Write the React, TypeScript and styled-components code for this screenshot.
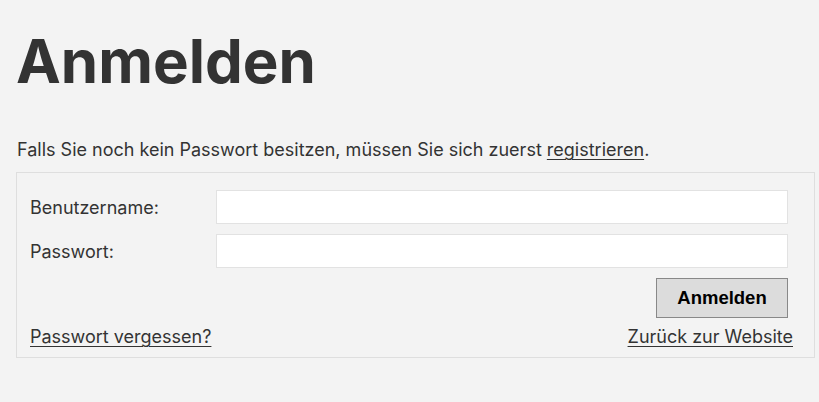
import React from "react";
import styled, { createGlobalStyle } from "styled-components";

const Global = createGlobalStyle`
  html, body { margin: 0; padding: 0; background: #f3f3f3; }
  body { font-family: Inter, "Noto Sans", sans-serif; color: #333; }
`;

const Page = styled.main`
  padding: 0 4px 0 16px;
`;

const Title = styled.h1`
  font-family: Inter, sans-serif;
  font-weight: 700;
  font-size: 60px;
  line-height: 1;
  margin: 31px 0 0 0;
  color: #333;
`;

const Intro = styled.p`
  font-size: 18px;
  line-height: 24px;
  margin: 47px 0 10px 1px;
`;

const TextLink = styled.a`
  color: #333;
  text-decoration: underline;
  text-underline-offset: 3px;
  text-decoration-thickness: 1px;
`;

const Box = styled.form`
  border: 1px solid #dedede;
  padding: 17px 21px 10px 13px;
  display: flex;
  flex-direction: column;
  gap: 10px;
`;

const Row = styled.div`
  display: flex;
  align-items: center;
  padding-right: 5px;
`;

const Label = styled.label`
  width: 186px;
  font-size: 18px;
`;

const Input = styled.input`
  flex: 1;
  height: 34px;
  box-sizing: border-box;
  border: 1px solid #e2e2e2;
  background: #fff;
  outline: none;
  font-size: 16px;
  padding: 0 6px;
`;

const Actions = styled.div`
  display: flex;
  justify-content: flex-end;
  padding-right: 5px;
`;

const Button = styled.button`
  font-family: "Liberation Sans", Arial, sans-serif;
  font-weight: 700;
  font-size: 18.5px;
  color: #000;
  background: #dcdcdc;
  border: 1px solid #888;
  width: 132px;
  height: 40px;
`;

const Footer = styled.div`
  display: flex;
  justify-content: space-between;
  font-size: 18px;
  margin-top: -2px;
`;

export default function App() {
  return (
    <Page>
      <Global />
      <Title>Anmelden</Title>
      <Intro>
        Falls Sie noch kein Passwort besitzen, müssen Sie sich zuerst{" "}
        <TextLink href="#">registrieren</TextLink>.
      </Intro>
      <Box onSubmit={(e) => e.preventDefault()}>
        <Row>
          <Label htmlFor="u">Benutzername:</Label>
          <Input id="u" type="text" autoFocus />
        </Row>
        <Row>
          <Label htmlFor="p">Passwort:</Label>
          <Input id="p" type="password" />
        </Row>
        <Actions>
          <Button type="submit">Anmelden</Button>
        </Actions>
        <Footer>
          <TextLink href="#">Passwort vergessen?</TextLink>
          <TextLink href="#">Zurück zur Website</TextLink>
        </Footer>
      </Box>
    </Page>
  );
}
